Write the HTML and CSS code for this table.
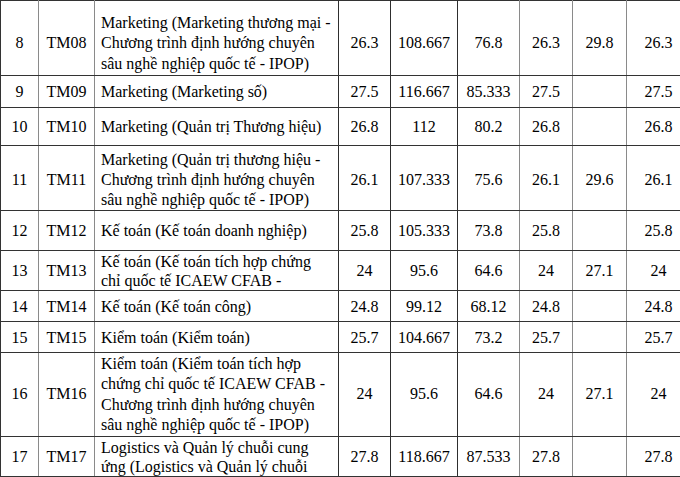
FILE: index.html
```html
<!DOCTYPE html>
<html lang="vi">
<head>
<meta charset="utf-8">
<title>Điểm chuẩn</title>
<link rel="stylesheet" href="styles.css">
</head>
<body>
<table class="scores">
  <colgroup>
    <col class="c-no">
    <col class="c-code">
    <col class="c-name">
    <col class="c-a">
    <col class="c-b">
    <col class="c-c">
    <col class="c-d">
    <col class="c-e">
    <col class="c-f">
  </colgroup>
  <tbody>
    <tr class="h75 first">
      <td class="no">8</td><td class="code">TM08</td>
      <td class="name">Marketing (Marketing thương mại - Chương trình định hướng chuyên sâu nghề nghiệp quốc tế - IPOP)</td>
      <td class="a">26.3</td><td class="b">108.667</td><td class="c">76.8</td><td class="d">26.3</td><td class="e">29.8</td><td class="f">26.3</td>
    </tr>
    <tr class="h32">
      <td class="no">9</td><td class="code">TM09</td>
      <td class="name">Marketing (Marketing số)</td>
      <td class="a">27.5</td><td class="b">116.667</td><td class="c">85.333</td><td class="d">27.5</td><td class="e"></td><td class="f">27.5</td>
    </tr>
    <tr class="h38">
      <td class="no">10</td><td class="code">TM10</td>
      <td class="name">Marketing (Quản trị Thương hiệu)</td>
      <td class="a">26.8</td><td class="b">112</td><td class="c">80.2</td><td class="d">26.8</td><td class="e"></td><td class="f">26.8</td>
    </tr>
    <tr class="h65 low">
      <td class="no">11</td><td class="code">TM11</td>
      <td class="name">Marketing (Quản trị thương hiệu - Chương trình định hướng chuyên sâu nghề nghiệp quốc tế - IPOP)</td>
      <td class="a">26.1</td><td class="b">107.333</td><td class="c">75.6</td><td class="d">26.1</td><td class="e">29.6</td><td class="f">26.1</td>
    </tr>
    <tr class="h40">
      <td class="no">12</td><td class="code">TM12</td>
      <td class="name">Kế toán (Kế toán doanh nghiệp)</td>
      <td class="a">25.8</td><td class="b">105.333</td><td class="c">73.8</td><td class="d">25.8</td><td class="e"></td><td class="f">25.8</td>
    </tr>
    <tr class="h40 tight">
      <td class="no">13</td><td class="code">TM13</td>
      <td class="name">Kế toán (Kế toán tích hợp chứng chỉ quốc tế ICAEW CFAB -</td>
      <td class="a">24</td><td class="b">95.6</td><td class="c">64.6</td><td class="d">24</td><td class="e">27.1</td><td class="f">24</td>
    </tr>
    <tr class="h31">
      <td class="no">14</td><td class="code">TM14</td>
      <td class="name">Kế toán (Kế toán công)</td>
      <td class="a">24.8</td><td class="b">99.12</td><td class="c">68.12</td><td class="d">24.8</td><td class="e"></td><td class="f">24.8</td>
    </tr>
    <tr class="h31">
      <td class="no">15</td><td class="code">TM15</td>
      <td class="name">Kiểm toán (Kiểm toán)</td>
      <td class="a">25.7</td><td class="b">104.667</td><td class="c">73.2</td><td class="d">25.7</td><td class="e"></td><td class="f">25.7</td>
    </tr>
    <tr class="h84 tight4">
      <td class="no">16</td><td class="code">TM16</td>
      <td class="name">Kiểm toán (Kiểm toán tích hợp chứng chỉ quốc tế ICAEW CFAB - Chương trình định hướng chuyên sâu nghề nghiệp quốc tế - IPOP)</td>
      <td class="a">24</td><td class="b">95.6</td><td class="c">64.6</td><td class="d">24</td><td class="e">27.1</td><td class="f">24</td>
    </tr>
    <tr class="h40 tight">
      <td class="no">17</td><td class="code">TM17</td>
      <td class="name">Logistics và Quản lý chuỗi cung ứng (Logistics và Quản lý chuỗi</td>
      <td class="a">27.8</td><td class="b">118.667</td><td class="c">87.533</td><td class="d">27.8</td><td class="e"></td><td class="f">27.8</td>
    </tr>
  </tbody>
</table>
</body>
</html>
```

FILE: styles.css
```css
html, body {
  margin: 0;
  padding: 0;
  background: #ffffff;
  overflow: hidden;
}

.scores {
  border-collapse: collapse;
  table-layout: fixed;
  width: 690px;
  font-family: "Liberation Serif", "Times New Roman", serif;
  font-size: 16px;
  line-height: 20.5px;
  color: #000000;
}

.c-no { width: 38px; }
.c-code { width: 56px; }
.c-name { width: 244px; }
.c-a { width: 52px; }
.c-b { width: 67px; }
.c-c { width: 62px; }
.c-d { width: 53px; }
.c-e { width: 54px; }
.c-f { width: 64px; }

.scores td {
  border-top: 1px solid #333333;
  border-bottom: 1px solid #333333;
  border-left: 1px solid #8a8a8a;
  border-right: 1px solid #8a8a8a;
  text-align: center;
  vertical-align: middle;
  padding: 2px 0 0 0;
  white-space: nowrap;
}

.scores td.name {
  text-align: left;
  white-space: normal;
  padding-left: 6px;
  padding-right: 4px;
  border-right-color: #2e2e2e;
}

.scores td.a,
.scores td.b {
  border-right-color: #2e2e2e;
}

.scores td.no {
  border-left-color: #333333;
}

.h75 { height: 75px; }
.h32 { height: 32px; }
.h38 { height: 38px; }
.h65 { height: 65px; }
.h40 { height: 40px; }
.h31 { height: 31px; }
.h84 { height: 84px; }

.first td { padding-top: 11px; }

.low td {
  padding-top: 3px;
  line-height: 20px;
}

.tight td {
  padding-top: 0;
  line-height: 19px;
}

.tight4 td {
  padding-top: 0;
  line-height: 20.5px;
}
```
